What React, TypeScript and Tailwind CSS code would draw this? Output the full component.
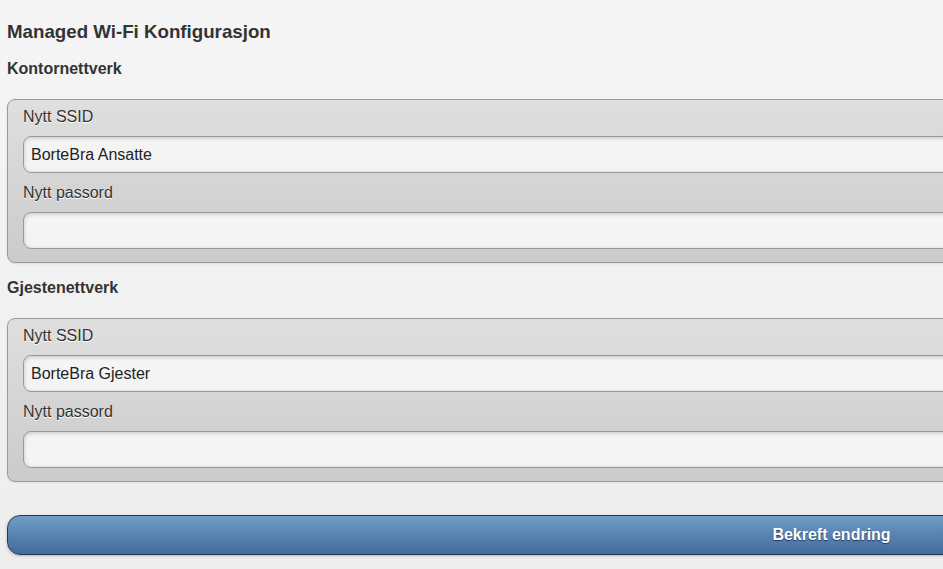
import { useState } from "react";

const Field = ({
  label,
  value,
  onChange,
  type = "text",
}: {
  label: string;
  value: string;
  onChange: (v: string) => void;
  type?: string;
}) => (
  <div>
    <label className="block text-[16px] leading-[20px] text-[#333] [text-shadow:0_1px_0_#fff]">
      {label}
    </label>
    <input
      type={type}
      value={value}
      onChange={(e) => onChange(e.target.value)}
      className="mt-[9px] block w-full h-[37px] rounded-[8px] border border-[#999] bg-[#f4f4f4] px-[7px] text-[16px] text-[#222] shadow-[inset_0_1px_4px_rgba(0,0,0,0.2)] outline-none"
    />
  </div>
);

const NetworkPanel = ({
  title,
  ssid,
  setSsid,
  pass,
  setPass,
}: {
  title: string;
  ssid: string;
  setSsid: (v: string) => void;
  pass: string;
  setPass: (v: string) => void;
}) => (
  <section>
    <h3 className="text-[16px] leading-[20px] font-bold text-[#333]">{title}</h3>
    <div className="mt-[20px] rounded-[8px] border border-[#9a9a9a] bg-gradient-to-b from-[#dfdfdf] to-[#cbcbcb] pt-[7px] pb-[13px] px-[15px] shadow-[0_1px_2px_rgba(0,0,0,0.08)]">
      <Field label="Nytt SSID" value={ssid} onChange={setSsid} />
      <div className="mt-[10px]">
        <Field label="Nytt passord" value={pass} onChange={setPass} type="password" />
      </div>
    </div>
  </section>
);

export default function App() {
  const [officeSsid, setOfficeSsid] = useState("BorteBra Ansatte");
  const [officePass, setOfficePass] = useState("");
  const [guestSsid, setGuestSsid] = useState("BorteBra Gjester");
  const [guestPass, setGuestPass] = useState("");

  return (
    <div className="w-screen h-screen overflow-hidden bg-gradient-to-b from-[#f5f5f5] to-[#eeeeee] font-['Liberation_Sans',Arial,sans-serif]">
      <div className="w-[1663px] px-[7px] pt-[20px]">
        <h2 className="text-[18.72px] leading-[24px] font-bold text-[#333]">
          Managed Wi-Fi Konfigurasjon
        </h2>
        <div className="mt-[15px]">
          <NetworkPanel
            title="Kontornettverk"
            ssid={officeSsid}
            setSsid={setOfficeSsid}
            pass={officePass}
            setPass={setOfficePass}
          />
        </div>
        <div className="mt-[15px]">
          <NetworkPanel
            title="Gjestenettverk"
            ssid={guestSsid}
            setSsid={setGuestSsid}
            pass={guestPass}
            setPass={setGuestPass}
          />
        </div>
        <button
          type="button"
          className="mt-[33px] block w-full h-[40px] rounded-[13px] border border-[#1f3b5c] bg-gradient-to-b from-[#6e9dc7] to-[#44699b] text-[16px] font-bold text-white [text-shadow:0_1px_1px_#1e3a5a] shadow-[0_1px_3px_rgba(0,0,0,0.25)]"
        >
          Bekreft endring
        </button>
      </div>
    </div>
  );
}
